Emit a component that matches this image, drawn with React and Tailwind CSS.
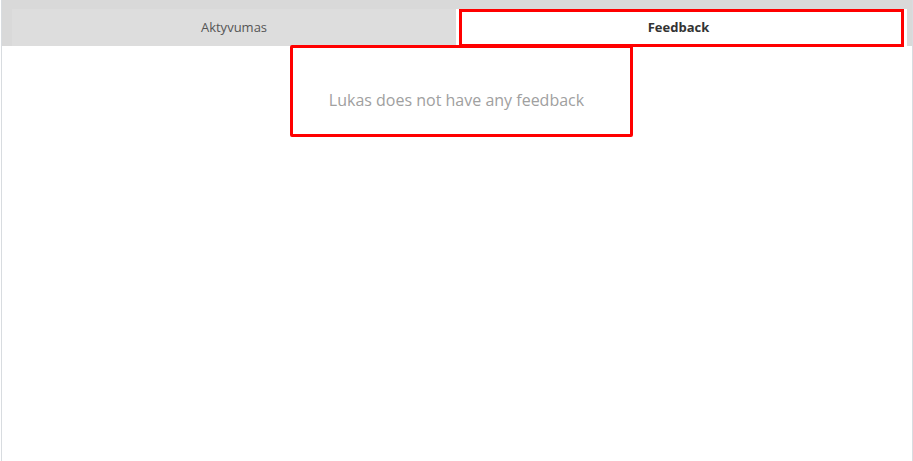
const tabs = ['Aktyvumas', 'Feedback'];

const App = () => {
  const active = 'Feedback';

  return (
    <div className="h-[461px] w-[913px] bg-white pl-px font-['Open_Sans',sans-serif]">
      <div className="h-full flex flex-col border-x border-[#d8dce0]">
        <div className="flex bg-[#d9d9d9] pt-[9px] pl-[10px] pr-[5px]">
          {tabs.map((t) =>
            t === active ? (
              <div key={t} className="flex-1 bg-white px-[3px]">
                <div className="h-[38px] -mb-px flex items-center justify-center border-[3px] border-[#ff0000] pr-[6px] text-[13px] font-bold text-[#333]">
                  {t}
                </div>
              </div>
            ) : (
              <div key={t} className="w-[444px] h-[37px] flex items-center justify-center bg-[#dddddd] text-[13px] text-[#555]">
                {t}
              </div>
            )
          )}
        </div>

        <div className="flex-1 flex justify-center">
          <div className="ml-[9px] w-[343px] h-[92px] -mt-px border-[3px] border-[#ff0000] rounded-[2px] pt-[40px] pr-[10px] text-center">
            <p className="text-base leading-6 text-[#a0a0a0]">Lukas does not have any feedback</p>
          </div>
        </div>
      </div>
    </div>
  );
};

export default App;
